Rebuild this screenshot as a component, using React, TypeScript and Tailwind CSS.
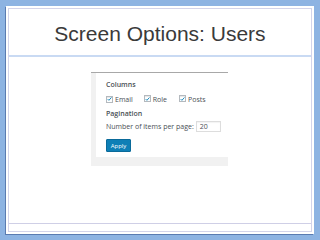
import React from "react";

function Check() {
  return (
    <span className="inline-flex items-center justify-center w-[7px] h-[7px] border border-[#b4b9be] bg-white shadow-[inset_0_1px_1px_rgba(0,0,0,0.1)]">
      <svg width="6" height="6" viewBox="0 0 6 6">
        <path d="M0.8 3.1 L2.3 4.6 L5.3 1.2" fill="none" stroke="#1e8cbe" strokeWidth="1.2" />
      </svg>
    </span>
  );
}

export default function App() {
  const font = { fontFamily: '"Open Sans", "Liberation Sans", sans-serif' };
  return (
    <div className="w-[320px] h-[240px] bg-[#8db3e2] pt-[6px] pl-[6px] pr-[6px] pb-[6px]">
      <div className="w-full h-full bg-white shadow-[-1px_1px_0_#5a7bb0] pt-[2px] pl-[2px] pr-[2px] pb-[2px]">
        <div className="w-full h-full border border-[#d4d4ea] flex flex-col">
          <div className="h-[48px] flex items-center justify-center border-b-2 border-[#c9daf3]">
            <span
              className="text-[21px] text-[#3a3a3a] leading-none pt-[2px]"
              style={{ fontFamily: '"Liberation Sans", Arial, sans-serif' }}
            >
              Screen Options: Users
            </span>
          </div>
          <div className="flex-1 pt-[15px] pl-[82px]">
            <div className="w-[137px] h-[94px] bg-[#f1f1f1] border-t border-[#a8a8a8] pl-[5px] pb-[9px]" style={font}>
              <div className="w-full h-full bg-white pl-[10px] pt-[7px] text-[7px] text-[#4a4f55] leading-none flex flex-col">
                <div className="font-semibold h-[8px] flex items-center">Columns</div>
                <div className="flex items-center mt-[7px] h-[8px]">
                  <Check />
                  <span className="ml-[2px]">Email</span>
                  <span className="ml-[11px]"><Check /></span>
                  <span className="ml-[2px]">Role</span>
                  <span className="ml-[12px]"><Check /></span>
                  <span className="ml-[2px]">Posts</span>
                </div>
                <div className="font-semibold mt-[6px] h-[8px] flex items-center">Pagination</div>
                <div className="flex items-center mt-[4px]">
                  <span>Number of items per page:</span>
                  <span className="ml-[2px] w-[25px] h-[11px] border border-[#dddddd] flex items-center pl-[3px] text-[7px] shadow-[inset_0_1px_1px_rgba(0,0,0,0.05)]">20</span>
                </div>
                <div className="mt-[7px]">
                  <span className="inline-flex items-center justify-center w-[25px] h-[13px] bg-[#0e7fb6] text-white text-[6px] rounded-[1px] border border-[#0a6a9a]">Apply</span>
                </div>
              </div>
            </div>
          </div>
          <div className="h-[8px] border-t border-[#cfcfe6]"></div>
        </div>
      </div>
    </div>
  );
}
